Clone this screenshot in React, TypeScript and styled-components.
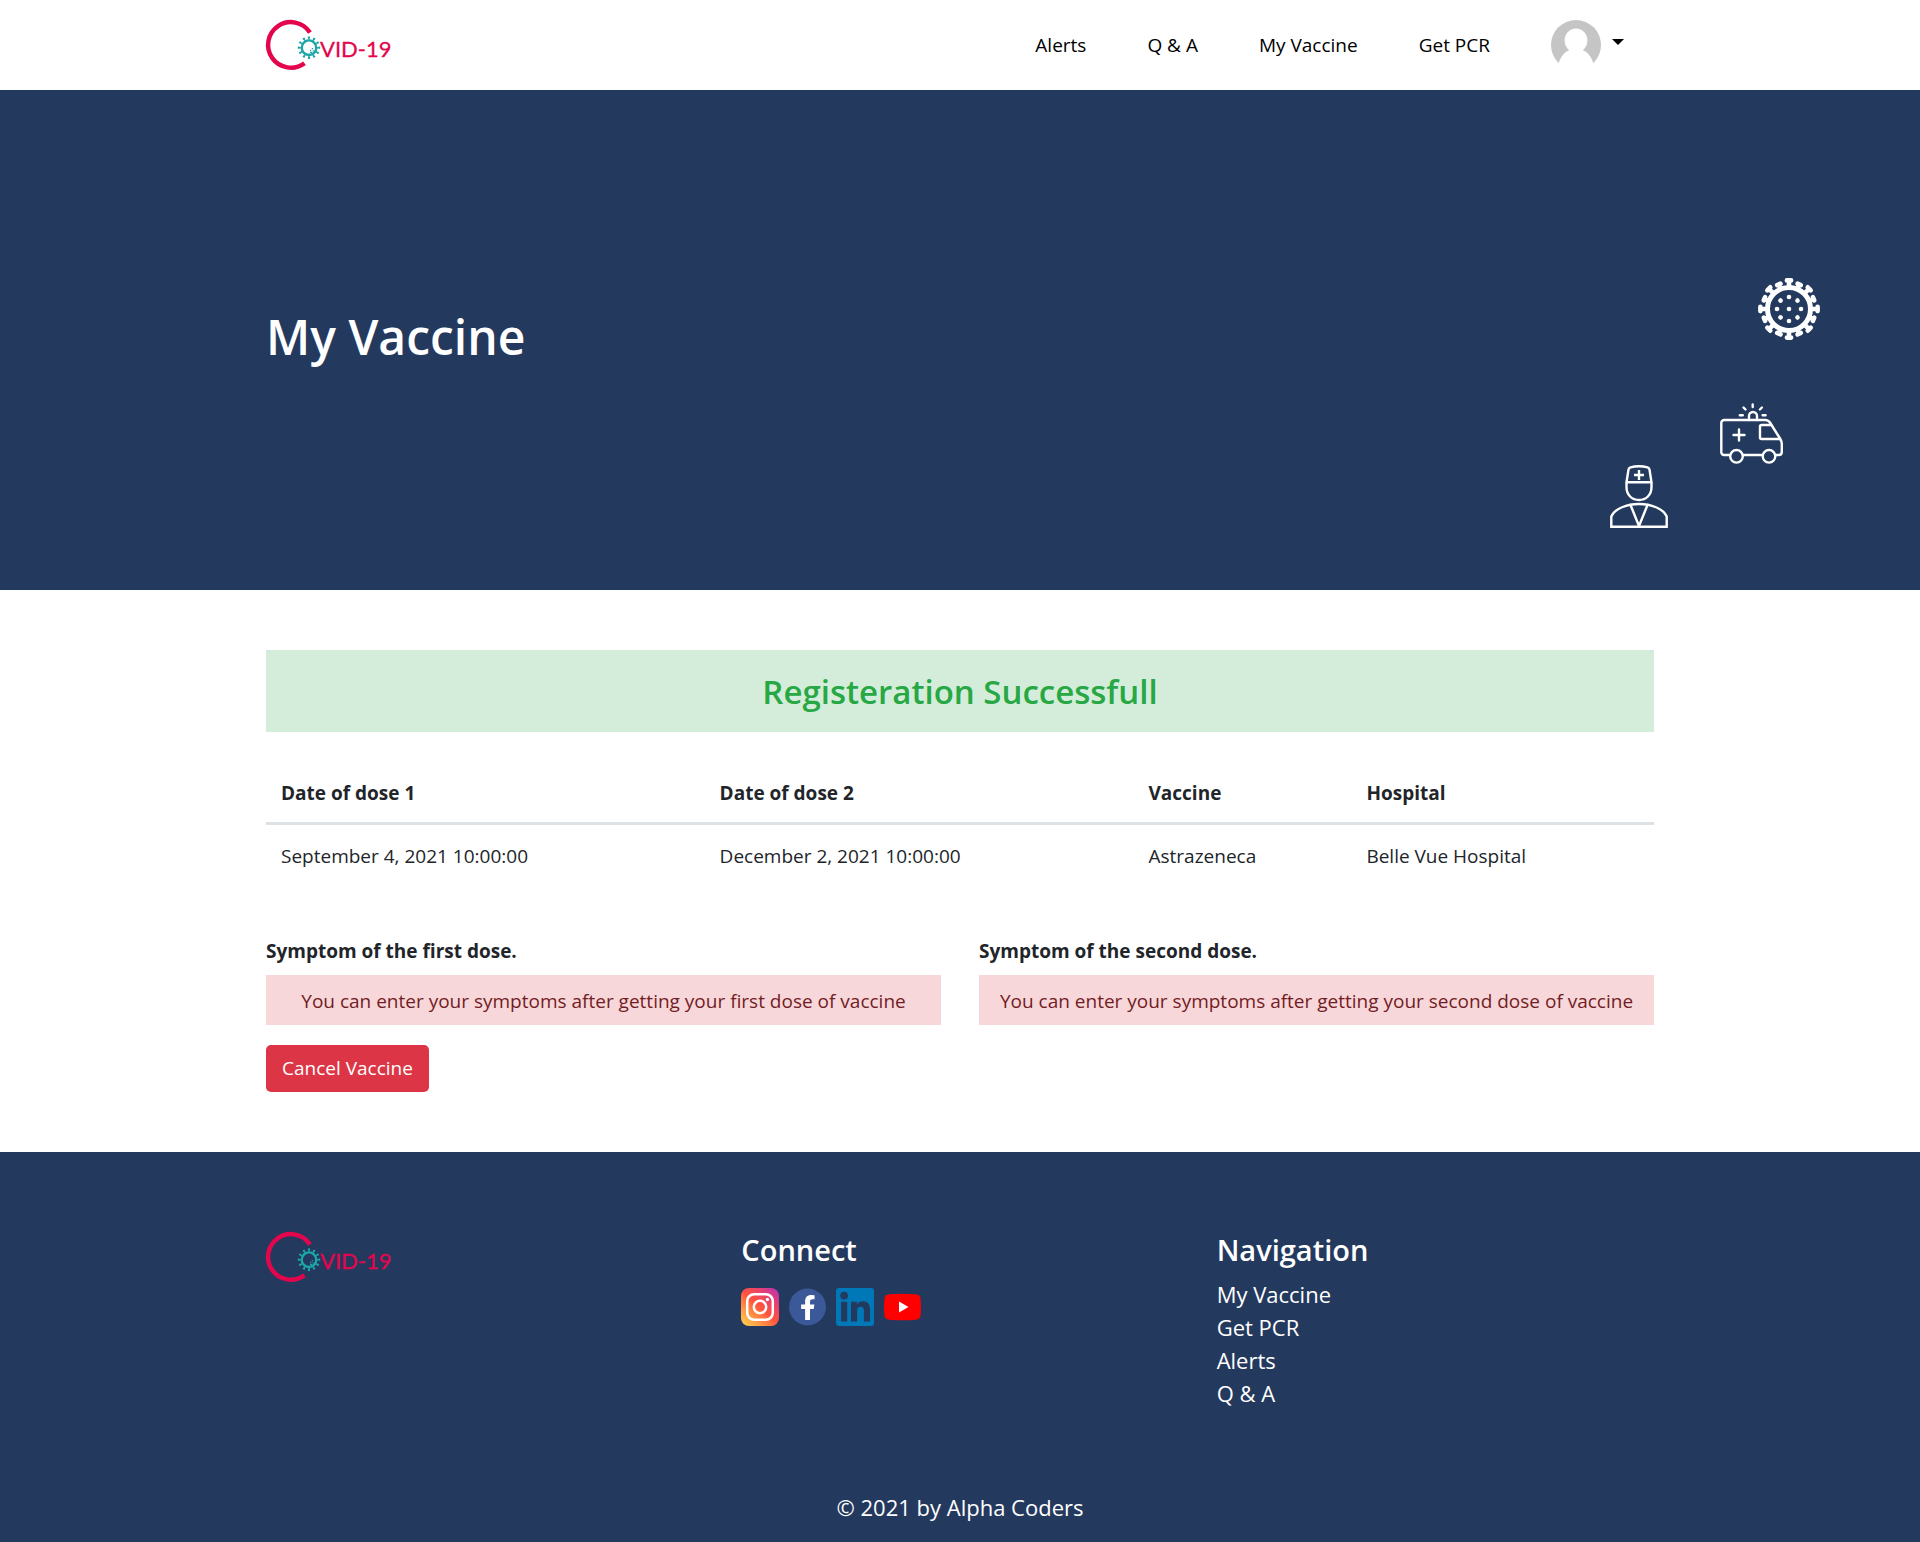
import React from "react";
import styled, { createGlobalStyle } from "styled-components";

const navy = "#24395e";
const crimson = "#e3064d";
const teal = "#1da5a8";

const GlobalStyle = createGlobalStyle`
  *, *::before, *::after { box-sizing: border-box; }
  body {
    margin: 0;
    background: #fff;
    color: #212529;
    font-family: "Segoe UI", "Open Sans", "Noto Sans", sans-serif;
    font-size: 19px;
    line-height: 30px;
  }
`;

const Container = styled.div`
  width: 100%;
  max-width: 1426px;
  margin: 0 auto;
  padding: 0 19px;
`;

const Header = styled.header`
  background: #fff;
`;

const HeaderBar = styled(Container)`
  display: flex;
  align-items: center;
  justify-content: space-between;
  min-height: 90px;
`;

const LogoLink = styled.a`
  display: block;
  width: 126px;
  height: 50px;
`;

const NavList = styled.nav`
  display: flex;
  align-items: center;
  gap: 61px;
  padding-right: 30px;
`;

const NavLink = styled.a`
  color: #000;
  text-decoration: none;
`;

const ProfileButton = styled.button`
  display: flex;
  align-items: center;
  gap: 11px;
  padding: 0;
  border: 0;
  background: none;
  cursor: pointer;
`;

const Caret = styled.span`
  margin-bottom: 6px;
  border: 6px solid transparent;
  border-top-color: #000;
  border-bottom: 0;
`;

const Hero = styled.section`
  position: relative;
  display: flex;
  align-items: center;
  min-height: 500px;
  padding-bottom: 6px;
  background: ${navy};
  color: #fff;
`;

const HeroTitle = styled.h1`
  margin: 0;
  font-size: 48px;
  font-weight: 600;
  line-height: 60px;
`;

const HeroArt = styled.div`
  position: absolute;
  top: 188px;
  right: 100px;
  display: flex;
  flex-direction: column;
  align-items: flex-end;
`;

const HeroIcon = styled.svg<{ $inset?: number; $above?: number }>`
  display: block;
  margin-top: ${(p) => p.$above ?? 0}px;
  margin-right: ${(p) => p.$inset ?? 0}px;
  fill: none;
  stroke: #fff;
  stroke-width: 2.4;
`;

const Content = styled(Container)`
  padding-top: 60px;
  padding-bottom: 60px;
`;

const SuccessBanner = styled.h2`
  margin: 0 0 30px;
  padding: 21px 20px 19px;
  background: #d4edda;
  color: #28a745;
  font-size: 33px;
  font-weight: 600;
  line-height: 42px;
  text-align: center;
`;

const DoseTable = styled.table`
  width: 100%;
  margin-bottom: 51px;
  border-collapse: separate;
  border-spacing: 0;
  text-align: left;
`;

const HeadCell = styled.th<{ $share: number }>`
  width: ${(p) => p.$share}%;
  padding: 16px 15px 14px;
  border-bottom: 3px solid #dee2e6;
  font-weight: 700;
`;

const Cell = styled.td`
  padding: 16px 15px 14px;
`;

const SymptomGrid = styled.div`
  display: grid;
  grid-template-columns: 1fr 1fr;
  gap: 38px;
  margin-bottom: 20px;
`;

const SymptomTitle = styled.h3`
  margin: 0 0 9px;
  font-size: 19px;
  font-weight: 700;
  line-height: 30px;
`;

const SymptomNotice = styled.p`
  margin: 0;
  padding: 11px 10px 9px;
  background: #f8d7da;
  color: #721c24;
  text-align: center;
`;

const DangerButton = styled.button`
  display: block;
  padding: 9px 16px;
  border: 0;
  border-radius: 5px;
  background: #dc3545;
  color: #fff;
  font: inherit;
  line-height: 29px;
  cursor: pointer;
`;

const Footer = styled.footer`
  padding: 80px 0 18px;
  background: ${navy};
  color: #fff;
  font-size: 22px;
  line-height: 33px;
`;

const FooterColumns = styled.div`
  display: grid;
  grid-template-columns: repeat(3, 1fr);
  gap: 38px;
  margin-bottom: 81px;
`;

const FooterTitle = styled.h4`
  margin: 0 0 10px;
  font-size: 29px;
  font-weight: 600;
  line-height: 36px;
`;

const SocialRow = styled.div`
  display: flex;
  gap: 10px;
  padding-top: 10px;
`;

const SocialLink = styled.a`
  display: block;
  height: 38px;
`;

const FooterLinks = styled.ul`
  margin: 0;
  padding: 0;
  list-style: none;
`;

const FooterLink = styled.a`
  color: #fff;
  text-decoration: none;
`;

const Copyright = styled.p`
  margin: 0;
  text-align: center;
`;

const Wordmark = styled.text`
  fill: ${crimson};
  stroke: ${crimson};
  stroke-width: 0.3px;
  font-family: Lato, sans-serif;
  font-size: 22px;
`;

const range = (n: number) => Array.from({ length: n }, (_, i) => i);

function Logo() {
  return (
    <svg width="126" height="50" viewBox="0 0 126 50" overflow="visible" aria-label="Covid-19">
      <path d="M44 12.5A22.8 22.8 0 1 0 38.5 43.2" fill="none" stroke={crimson} strokeWidth="4.4" />
      <circle cx="43" cy="27.7" r="7.3" fill="none" stroke={teal} strokeWidth="2.4" />
      {range(12).map((i) => (
        <path
          key={i}
          d="M43 19.6V17.2M41.9 17.3H44.1"
          stroke={teal}
          strokeWidth="1.6"
          transform={`rotate(${i * 30} 43 27.7)`}
        />
      ))}
      <path d="M44 32.4h2M45.8 28.6h1.2M44 30.4h1.2M46.5 31h1.6" stroke={teal} strokeWidth="1.2" />
      <Wordmark x="54" y="37">VID-19</Wordmark>
    </svg>
  );
}

function Avatar() {
  return (
    <svg width="50" height="50" viewBox="0 0 50 50" aria-hidden="true">
      <circle cx="25" cy="25" r="25" fill="#c5c5c5" />
      <ellipse cx="25" cy="20.5" rx="11.4" ry="12" fill="#fff" />
      <path
        d="M7.5 43.5C9.5 37 13.5 31.8 18.5 30Q20 29.4 19.5 27H30.5Q30 29.4 31.5 30C36.5 31.8 40.5 37 42.5 43.5L40 50H10Z"
        fill="#fff"
      />
    </svg>
  );
}

function VirusIcon() {
  return (
    <HeroIcon width="62" height="62" viewBox="0 0 62 62" aria-hidden="true">
      <circle cx="31" cy="31" r="21.5" strokeWidth="5" />
      {range(16).map((i) => (
        <path
          key={i}
          d={i % 2 === 0 ? "M31 8V3M28.9 2.4H33.1" : "M31 8V5M29.2 4.4H32.8"}
          strokeWidth="4.6"
          strokeLinecap="round"
          transform={`rotate(${i * 22.5} 31 31)`}
        />
      ))}
      <g fill="#fff" stroke="none">
        <circle cx="31" cy="31" r="2.3" />
        {range(8).map((i) => (
          <circle key={i} cx="31" cy="19" r="2.3" transform={`rotate(${i * 45} 31 31)`} />
        ))}
      </g>
    </HeroIcon>
  );
}

function AmbulanceIcon() {
  return (
    <HeroIcon $above={63} $inset={37} width="63" height="62" viewBox="0 0 63 62" strokeLinecap="round" aria-hidden="true">
      <path d="M10 52H4a2.700 2.700 0 0 1-2.700-3V20a3 3 0 0 1 3-3h41q3 0 5 3l10 16q1.500 2.500 1.500 5v8q0 3-3 3h-3M23 52h19.500" />
      <path d="M51 22H41.500q-1.500 0-1.500 1.500v11q0 1.500 1.500 1.500H60M29 17v-4a4 4 0 0 1 8 0v4" />
      <circle cx="16.500" cy="53.300" r="6.300" />
      <circle cx="49" cy="53.300" r="6.300" />
      <path d="M19 26.500v11M13.500 32h11M32.700 1.500v2.500M23.500 4.500l2 2M41.900 4.500l-2 2M19.800 12.300h3M42.600 12.300h3" />
    </HeroIcon>
  );
}

function DoctorIcon() {
  return (
    <HeroIcon $inset={152} width="58" height="63" viewBox="0 0 58 63" aria-hidden="true">
      <path d="M16.500 17.300 18.500 4.500Q19 2.800 20.500 2.400Q29 0 37.500 2.400Q39 2.800 39.500 4.500L41.500 17.300ZM16.500 17.300V22C16.500 30 22 35 29 35S41.500 30 41.500 22V17.300" />
      <path d="M29 5v10M24 10h10" />
      <path d="M1.300 61.800V51.500C5 43.500 17 39 29 39S53 43.500 56.700 51.500V61.800Z" />
      <path d="M20.500 40 29 61 37.500 40" />
    </HeroIcon>
  );
}

function InstagramIcon() {
  return (
    <svg width="38" height="38" viewBox="0 0 38 38" aria-hidden="true">
      <defs>
        <linearGradient id="insta" x1="0.05" y1="1" x2="0.95" y2="0">
          <stop offset="0" stopColor="#ffd24d" />
          <stop offset="0.25" stopColor="#ff9a45" />
          <stop offset="0.5" stopColor="#ff543e" />
          <stop offset="0.75" stopColor="#e8406e" />
          <stop offset="1" stopColor="#b832b8" />
        </linearGradient>
      </defs>
      <rect width="38" height="38" rx="8" fill="url(#insta)" />
      <g fill="none" stroke="#fff" strokeWidth="2.5">
        <rect x="6.200" y="6.200" width="25.600" height="25.600" rx="7" />
        <circle cx="19" cy="19" r="6.200" />
      </g>
      <circle cx="26.500" cy="11.500" r="1.700" fill="#fff" />
    </svg>
  );
}

function FacebookIcon() {
  return (
    <svg width="37" height="38" viewBox="0 0 37 38" aria-hidden="true">
      <circle cx="18.500" cy="19" r="18.500" fill="#3b5998" />
      <path
        d="M279.14 288l14.22-92.66h-88.91v-60.13c0-25.35 12.42-50.06 52.24-50.06h40.42V6.26S260.43 0 225.36 0c-73.22 0-121.08 44.38-121.08 124.72v70.62H22.89V288h81.39v224h100.17V288z"
        fill="#fff"
        transform="translate(11 7) scale(0.049)"
      />
    </svg>
  );
}

function LinkedinIcon() {
  return (
    <svg width="38" height="38" viewBox="0 0 38 38" aria-hidden="true">
      <rect width="38" height="38" rx="3" fill="#0077b7" />
      <g fill={navy} transform="translate(-1.300 -4.800) scale(0.092)">
        <circle cx="102.200" cy="134.500" r="42" />
        <path d="M69 202.200h66.500V416H69z" />
        <path d="M384.300 416h-66.400V312c0-24.800-.5-56.700-34.500-56.700-34.600 0-39.900 27-39.900 54.900V416h-66.400V202.200h63.700v29.200h.9c8.900-16.800 30.600-34.500 62.900-34.500 67.200 0 79.700 44.300 79.700 101.900z" />
      </g>
    </svg>
  );
}

function YoutubeIcon() {
  return (
    <svg width="37" height="38" viewBox="0 0 37 38" aria-hidden="true">
      <path
        d="M5 6.300Q18.500 5.300 32 6.300Q36 6.700 36.500 10.500Q37.500 19 36.500 27.500Q36 31.300 32 31.700Q18.500 32.700 5 31.700Q1 31.300.5 27.500Q-.5 19 .5 10.500Q1 6.700 5 6.300Z"
        fill="#f00"
      />
      <path d="M15 13.500v11l9.500-5.500z" fill="#fff" />
    </svg>
  );
}

const headerLinks = ["Alerts", "Q & A", "My Vaccine", "Get PCR"];
const footerLinks = ["My Vaccine", "Get PCR", "Alerts", "Q & A"];

const doseColumns = [
  { title: "Date of dose 1", value: "September 4, 2021 10:00:00", share: 31.6 },
  { title: "Date of dose 2", value: "December 2, 2021 10:00:00", share: 30.9 },
  { title: "Vaccine", value: "Astrazeneca", share: 15.7 },
  { title: "Hospital", value: "Belle Vue Hospital", share: 21.8 },
];

const socials = [
  { name: "Instagram", Icon: InstagramIcon },
  { name: "Facebook", Icon: FacebookIcon },
  { name: "LinkedIn", Icon: LinkedinIcon },
  { name: "YouTube", Icon: YoutubeIcon },
];

export default function App() {
  return (
    <>
      <GlobalStyle />
      <Header>
        <HeaderBar>
          <LogoLink href="#" aria-label="Home">
            <Logo />
          </LogoLink>
          <NavList>
            {headerLinks.map((label) => (
              <NavLink key={label} href="#">
                {label}
              </NavLink>
            ))}
            <ProfileButton type="button" aria-label="Account menu">
              <Avatar />
              <Caret />
            </ProfileButton>
          </NavList>
        </HeaderBar>
      </Header>

      <Hero>
        <Container>
          <HeroTitle>My Vaccine</HeroTitle>
        </Container>
        <HeroArt>
          <VirusIcon />
          <AmbulanceIcon />
          <DoctorIcon />
        </HeroArt>
      </Hero>

      <Content as="main">
        <SuccessBanner>Registeration Successfull</SuccessBanner>
        <DoseTable>
          <thead>
            <tr>
              {doseColumns.map((c) => (
                <HeadCell key={c.title} scope="col" $share={c.share}>
                  {c.title}
                </HeadCell>
              ))}
            </tr>
          </thead>
          <tbody>
            <tr>
              {doseColumns.map((c) => (
                <Cell key={c.title}>{c.value}</Cell>
              ))}
            </tr>
          </tbody>
        </DoseTable>
        <SymptomGrid>
          <section>
            <SymptomTitle>Symptom of the first dose.</SymptomTitle>
            <SymptomNotice>You can enter your symptoms after getting your first dose of vaccine</SymptomNotice>
          </section>
          <section>
            <SymptomTitle>Symptom of the second dose.</SymptomTitle>
            <SymptomNotice>You can enter your symptoms after getting your second dose of vaccine</SymptomNotice>
          </section>
        </SymptomGrid>
        <DangerButton type="button">Cancel Vaccine</DangerButton>
      </Content>

      <Footer>
        <Container>
          <FooterColumns>
            <LogoLink href="#" aria-label="Home">
              <Logo />
            </LogoLink>
            <div>
              <FooterTitle>Connect</FooterTitle>
              <SocialRow>
                {socials.map(({ name, Icon }) => (
                  <SocialLink key={name} href="#" aria-label={name}>
                    <Icon />
                  </SocialLink>
                ))}
              </SocialRow>
            </div>
            <div>
              <FooterTitle>Navigation</FooterTitle>
              <FooterLinks>
                {footerLinks.map((label) => (
                  <li key={label}>
                    <FooterLink href="#">{label}</FooterLink>
                  </li>
                ))}
              </FooterLinks>
            </div>
          </FooterColumns>
          <Copyright>© 2021 by Alpha Coders</Copyright>
        </Container>
      </Footer>
    </>
  );
}
